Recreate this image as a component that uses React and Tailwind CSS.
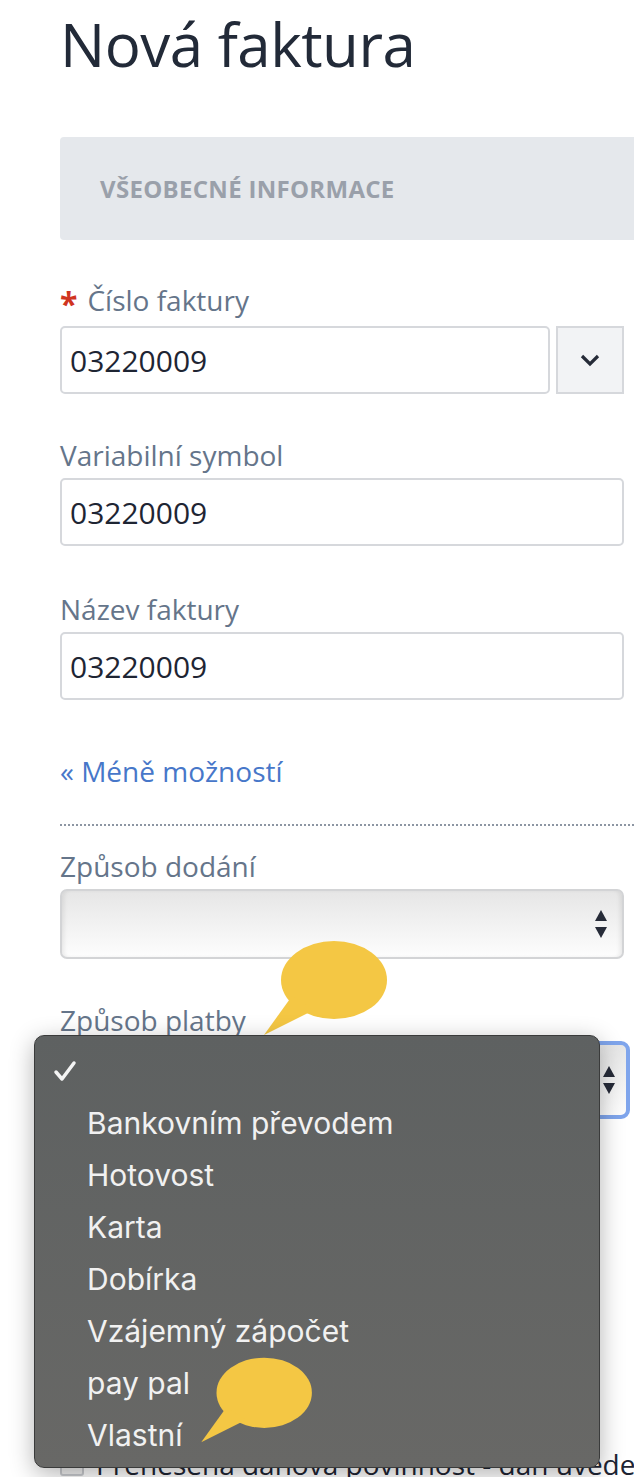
import React from "react";

const OPTIONS = ["Bankovním převodem", "Hotovost", "Karta", "Dobírka", "Vzájemný zápočet", "pay pal", "Vlastní"];

function Label({ children, required }) {
    return (
        <div className="flex items-center gap-[10px] text-[28px] leading-[34px] text-[#65758a] mb-[6px]">
            {required && <span className="text-[#d0341f] text-[32px] leading-none font-bold mt-2">*</span>}
            <span>{children}</span>
        </div>
    );
}

function TextInput({ value }) {
    return <div className="h-[68px] flex-1 border-2 border-[#d6d8dc] rounded-[5px] flex items-center px-[8px] text-[30px] text-[#1e2533] bg-white">{value}</div>;
}

function Arrows() {
    return (
        <svg width="14" height="30" viewBox="0 0 14 30">
            <path d="M7 1 L13 12 L1 12 Z" fill="#262b38" />
            <path d="M1 18 L13 18 L7 29 Z" fill="#262b38" />
        </svg>
    );
}

function Bubble({ className }) {
    return (
        <svg className={className} width="124" height="96" viewBox="0 0 124 96">
            <ellipse cx="70" cy="40" rx="53" ry="39" fill="#f4c744" />
            <path d="M28 56 L0 95 L50 70 Z" fill="#f4c744" />
        </svg>
    );
}

export default function App() {
    return (
        <div className="relative w-[634px] h-[1477px] overflow-hidden bg-white" style={{ fontFamily: "'Open Sans', 'Noto Sans', sans-serif" }}>
            <div className="pl-[60px]">
                <h1 className="text-[60px] leading-[64px] text-[#222a38] pt-[12px] tracking-[-0.5px]">Nová faktura</h1>

                {/* sekce */}
                <div className="mt-[61px] h-[103px] bg-[#e5e8ec] rounded-l-[4px] flex items-center pl-[40px]">
                    <span className="text-[24px] font-bold text-[#9aa0aa] tracking-[0.3px]">VŠEOBECNÉ INFORMACE</span>
                </div>

                <div className="pr-[10px] mt-[40px]">
                    <Label required>Číslo faktury</Label>
                    <div className="flex gap-[6px]">
                        <TextInput value="03220009" />
                        <div className="w-[68px] h-[68px] border-2 border-[#d6d8dc] bg-[#f2f3f5] flex items-center justify-center">
                            <svg width="22" height="14" viewBox="0 0 22 14">
                                <path d="M3 3 L11 11 L19 3" stroke="#262b38" strokeWidth="3.2" fill="none" />
                            </svg>
                        </div>
                    </div>

                    <div className="mt-[44px]">
                        <Label>Variabilní symbol</Label>
                        <div className="flex">
                            <TextInput value="03220009" />
                        </div>
                    </div>

                    <div className="mt-[46px]">
                        <Label>Název faktury</Label>
                        <div className="flex">
                            <TextInput value="03220009" />
                        </div>
                    </div>

                    <a className="block mt-[52px] text-[28px] leading-[38px] text-[#4777c9]">« Méně možností</a>
                </div>

                <div className="mt-[34px] border-t-2 border-dotted border-[#8d96a3]" />

                <div className="pr-[10px] mt-[23px]">
                    <Label>Způsob dodání</Label>
                    <div className="h-[70px] border-2 border-[#d3d4d6] rounded-[7px] bg-gradient-to-b from-[#e6e6e6] to-[#fdfdfd] flex items-center justify-end pr-[14px] shadow-[inset_4px_0_4px_-2px_rgba(0,0,0,0.08),inset_-4px_0_4px_-2px_rgba(0,0,0,0.08)]">
                        <Arrows />
                    </div>

                    <div className="mt-[44px]">
                        <Label>Způsob platby</Label>
                        <div className="h-[78px] -mt-[2px] border-[4px] border-[#7fa5ec] rounded-[9px] -mr-[6px] bg-gradient-to-b from-[#e6e6e6] to-[#fdfdfd] flex items-center justify-end pr-[10px]">
                            <Arrows />
                        </div>
                    </div>

                    <div className="mt-[328px] flex items-center gap-3 text-[28px] leading-[34px] text-[#1e2533] whitespace-nowrap">
                        <div className="w-[24px] h-[24px] border-2 border-[#c9cbcf] bg-[#f1f1f1] rounded-[3px] shrink-0" />
                        <span>Přenesená daňová povinnost - daň uvedena</span>
                    </div>
                </div>
            </div>

            <Bubble className="absolute left-[264px] top-[940px]" />

            {/* rozbalený seznam */}
            <div className="absolute left-[34px] top-[1035px] w-[566px] h-[433px] rounded-[10px] border border-[#3a3b3b] bg-gradient-to-b from-[#5e6161] to-[#686866] shadow-[0_6px_24px_rgba(0,0,0,0.3)]" style={{ fontFamily: "Inter, Roboto, sans-serif" }}>
                <div className="pt-[20px] flex flex-col">
                    <div className="h-[52px] flex items-center pl-[18px] -mt-[11px]">
                        <svg width="24" height="22" viewBox="0 0 24 22">
                            <path d="M3 12 L9 19 L21 3" stroke="#f4f4f4" strokeWidth="3.5" fill="none" strokeLinecap="round" strokeLinejoin="round" />
                        </svg>
                    </div>
                    {OPTIONS.map((o) => (
                        <div key={o} className="h-[52px] flex items-center pl-[52px] text-[30px] text-[#f1f1f1]">
                            {o}
                        </div>
                    ))}
                </div>
            </div>

            <Bubble className="absolute left-[195px] top-[1352px] scale-[0.9]" />
        </div>
    );
}
